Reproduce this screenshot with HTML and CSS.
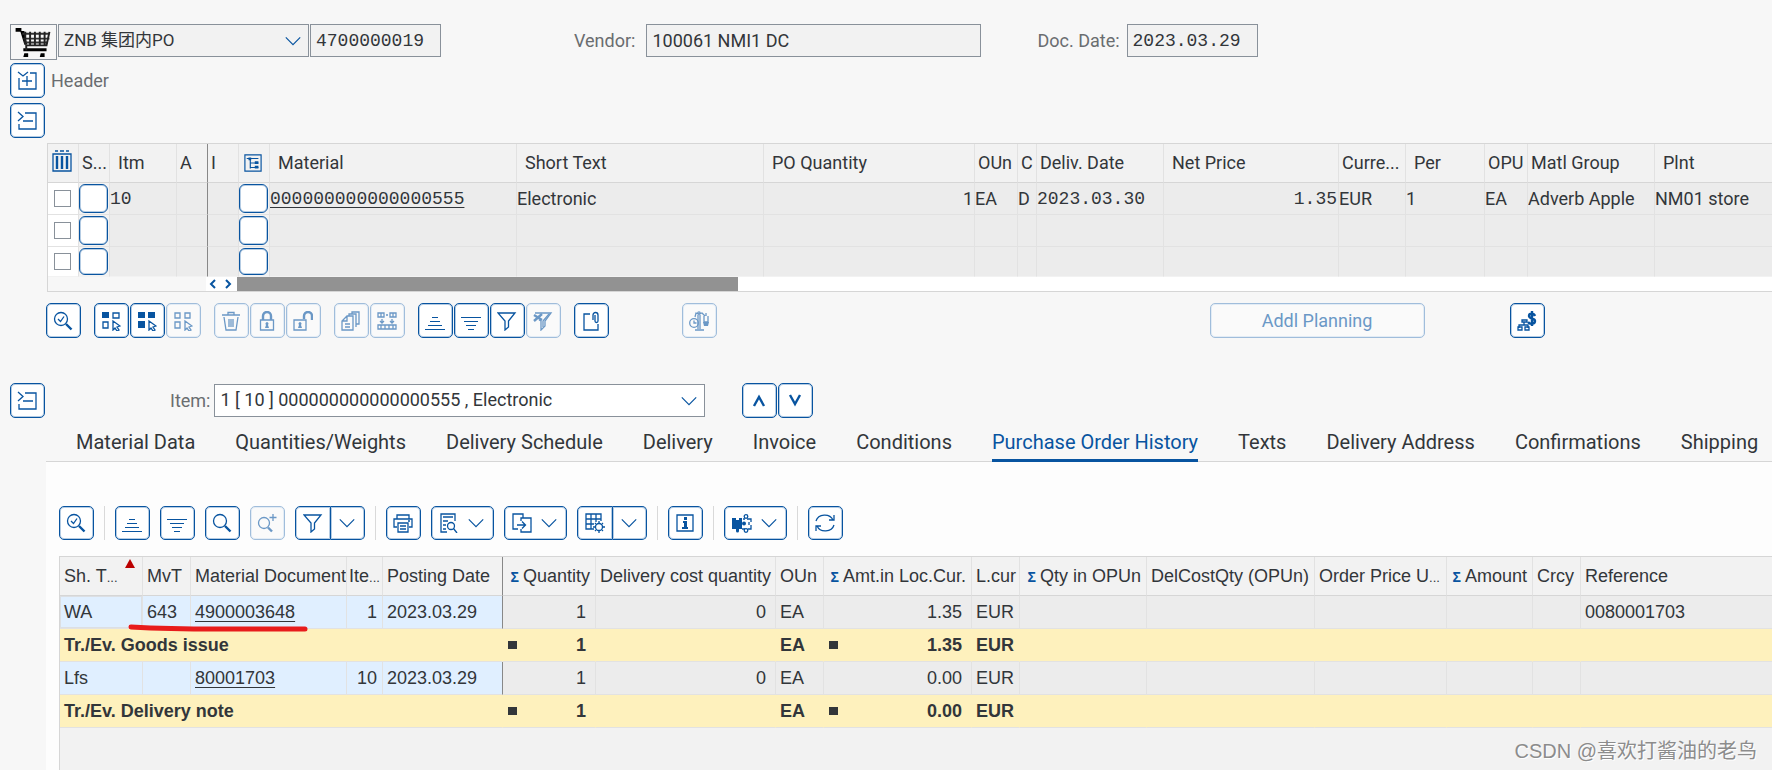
FILE: index.html
```html
<!DOCTYPE html>
<html lang="en">
<head>
<meta charset="utf-8">
<meta name="viewport" content="width=device-width, initial-scale=1">
<title>ZNB PO 4700000019</title>
<link rel="stylesheet" href="styles.css">
</head>
<body>
<svg class="sprite" aria-hidden="true">
  <symbol id="i-expand" viewBox="0 0 20 20"><path d="M1 1l5 4 5-4M13 2h6v16H2V7"/><path d="M5 10h10M10 5v10"/></symbol>
  <symbol id="i-collapse" viewBox="0 0 20 20"><path d="M1 1l5 4.500-5 4.500M8 2h11v16H2v-5M6 10h10"/></symbol>
  <symbol id="i-check-search" viewBox="0 0 20 20"><circle cx="8" cy="8" r="6.500"/><path d="M5 8l2.500 2.500L11 5.500"/><path class="thick" d="M13 13l5.500 5.500"/></symbol>
  <symbol id="i-search" viewBox="0 0 20 20"><circle cx="8" cy="8" r="6.500"/><path class="thick" d="M13 13l5.500 5.500"/></symbol>
  <symbol id="i-search-plus" viewBox="0 0 20 20"><circle cx="7" cy="10" r="5.500"/><path class="thick" d="M11 14.500l4 4"/><path d="M16 1v7M12.500 4.500h7"/></symbol>
  <symbol id="i-sel-one" viewBox="0 0 20 20"><path class="solid" d="M1 1h7v6H1z"/><path d="M12 2h6v5h-6zM2 11h5v6H2z"/><path d="M12 10l7 5-3 1 2 3-2 1-2-3-2 2z"/></symbol>
  <symbol id="i-sel-all" viewBox="0 0 20 20"><path class="solid" d="M1 1h7v6H1zM11 1h7v6h-7zM1 10h7v7H1z"/><path d="M12 10l7 5-3 1 2 3-2 1-2-3-2 2z"/></symbol>
  <symbol id="i-sel-none" viewBox="0 0 20 20"><path d="M2 2h5v5H2zM12 2h5v5h-5zM2 11h5v6H2z"/><path d="M12 10l7 5-3 1 2 3-2 1-2-3-2 2z"/></symbol>
  <symbol id="i-trash" viewBox="0 0 20 20"><path d="M1 4h18M7 4V1.500h6V4M3 6l2 13h10l2-13M8 8v8M10 8v8M12 8v8"/></symbol>
  <symbol id="i-lock" viewBox="0 0 20 20"><path d="M3.500 9h13v10h-13z"/><path class="thick" d="M6 9V5a4 4 0 0 1 8 0v4"/><path class="solid" d="M10 11a2 2 0 0 1 1 3l1 3H8l1-3a2 2 0 0 1 1-3z"/></symbol>
  <symbol id="i-unlock" viewBox="0 0 20 20"><path d="M1 9h12v10H1z"/><path class="thick" d="M11 8V5a4 4 0 0 1 8 0v4"/><path class="solid" d="M7 11a2 2 0 0 1 1 3l1 3H5l1-3a2 2 0 0 1 1-3z"/></symbol>
  <symbol id="i-copy" viewBox="0 0 20 20"><path d="M6 5h6v14H1v-9zM6 5v5H1M8 5V3h7v13M11 3V1h7v12h-3M4 13h5M4 16h5"/></symbol>
  <symbol id="i-split" viewBox="0 0 20 20"><path d="M1 2h6v4H1zM4 2v4M13 2h6v4h-6zM16 2v4M9 4h2M5 8v4M15 8v4M3 10l2 2 2-2M13 10l2 2 2-2M1 14h18v4H1zM4 14v4M8 14v4M12 14v4M16 14v4"/></symbol>
  <symbol id="i-asc" viewBox="0 0 20 20"><path class="rule" d="M7 6h6M5 10h10M3 14h14M0 18h20"/></symbol>
  <symbol id="i-desc" viewBox="0 0 20 20"><path class="rule" d="M0 6h20M3 10h14M5 14h10M7 18h6"/></symbol>
  <symbol id="i-filter" viewBox="0 0 20 20"><path d="M1 2h17l-6.500 8v6L8 19v-9z"/></symbol>
  <symbol id="i-filter-off" viewBox="0 0 20 20"><path d="M2 2h16l-6 8v5l-4 4v-9l-2-1"/><path class="thick" d="M1 4l8 5M9 3l-8 7"/><path d="M16 3l-6 7v6"/></symbol>
  <symbol id="i-attach" viewBox="0 0 20 20"><path d="M9 3H3v16h14v-6"/><path d="M12 9V4a2 2 0 0 1 5 0v6a1.500 1.500 0 0 1-3 0V4"/></symbol>
  <symbol id="i-scale" viewBox="0 0 20 20"><circle cx="5" cy="12" r="4.300"/><path d="M5 9.500V12h2.500M9 4v14M11 4v14M6 19h9M6 6l1-4 3 1 3-1 3 3M15 5v6h4V5M17 2v3"/><circle cx="10" cy="2" r="1.200"/><path class="solid" d="M14 11h6l-1 4h-4z"/></symbol>
  <symbol id="i-money" viewBox="0 0 20 20"><path d="M5 9h5v2H5zM7 11v3M2 17v-3h9v3M1 16h4v3H1zM8 16h4v3H8z"/><path class="thick" d="M18 5c-1-3-6-3-6 0s6 2 6 5-5 4-7 1M15 0v15"/></symbol>
  <symbol id="i-down" viewBox="0 0 20 20"><path d="M2 6l8 8 8-8"/></symbol>
  <symbol id="i-nav-up" viewBox="0 0 20 20"><path class="thick" d="M5 15l5-9 5 9"/></symbol>
  <symbol id="i-nav-down" viewBox="0 0 20 20"><path class="thick" d="M5 4l5 9 5-9"/></symbol>
  <symbol id="i-print" viewBox="0 0 20 20"><path d="M4 6V2h12v4M4 14H1V6h18v8h-3M5 10h10v9H5zM7 13h6M7 16h6M15 8h2"/></symbol>
  <symbol id="i-preview" viewBox="0 0 20 20"><path d="M8 19H2V1h14v7M4 4h10M4 8h5M4 12h3M4 16h3"/><circle cx="12" cy="13" r="3.500"/><path d="M14.500 15.500L18 20"/></symbol>
  <symbol id="i-export" viewBox="0 0 20 20"><path d="M6 16H1V1h10v4M9 8V5h10v14H9v-3M5 12h8M10 8.500l3.500 3.500-3.500 3.500"/></symbol>
  <symbol id="i-layout" viewBox="0 0 20 20"><path d="M9 16H1V1h15v7M1 6h15M1 11h8M6 1v15M11 1v8"/><circle cx="14" cy="14" r="3.500"/><path d="M14 8v2M14 18v2M8 14h2M18 14h2M10 10l1 1M17 17l1 1M18 10l-1 1M11 17l-1 1"/></symbol>
  <symbol id="i-info" viewBox="0 0 20 20"><path d="M2 2h16v16H2z"/><path class="solid" d="M9 4h3v3H9zM8 8h4v6h1v2H7v-2h2v-4H8z"/></symbol>
  <symbol id="i-puzzle" viewBox="0 0 20 20"><path class="solid" d="M0 5h4v2h3V5h3v11H7v2a1.500 1.500 0 0 1-3 0v-2H0z"/><circle class="solid" cx="12" cy="10.500" r="2"/><path d="M11 6h2M15 6h4v3M19 12v4h-3M13 16h-3M17 9v3"/><circle cx="14" cy="3.500" r="1.800"/><circle cx="14" cy="17.500" r="1.800"/></symbol>
  <symbol id="i-refresh" viewBox="0 0 20 20"><path d="M1 8a9 8 0 0 1 17-1M19 12a9 8 0 0 1-17 1M19 2v5h-5M1 18v-5h5"/></symbol>
  <symbol id="i-columns" viewBox="0 0 20 22"><path d="M3 1h3M8 1h4M14 1h3"/><path d="M1 4h18v17H1z"/><path class="thick" d="M5 6v13M10 6v13M15 6v13"/></symbol>
  <symbol id="i-config" viewBox="0 0 20 20"><path d="M1 1h18v18H1zM3 5h13M7 5v11M7 10h9M7 15h9"/><path class="solid" d="M5 4h3v3H5zM12 8h4v3h-4zM12 13h4v3h-4z"/></symbol>
</svg>

<header class="doc-header">
  <div class="doc-row">
    <svg class="cart" viewBox="0 0 36 30" aria-hidden="true">
      <path class="cart-solid" d="M0 0h6v3h3l3 14H9L5 4H0zM8 21h24v3H8zM9 26h4v4H8zM26 26h4v4h-5z"/>
      <path class="cart-rim" d="M7 6h28M8 11h27M9 15h24"/>
      <path class="cart-bar" d="M10 4v13M15 4v14M20 4v14M25 4v14M30 4v13M35 4l-3 14H10M11 17v6"/>
    </svg>
    <span class="select-box order-type">
      <select aria-label="Order type"><option>ZNB 集团内PO</option></select>
      <svg class="icon"><use href="#i-down"/></svg>
    </span>
    <input class="field mono order-no" type="text" value="4700000019" aria-label="Order number" readonly>
    <label class="vendor-label" for="vendor">Vendor:</label>
    <input class="field vendor" id="vendor" type="text" value="100061 NMI1 DC" readonly>
    <label class="date-label" for="doc-date">Doc. Date:</label>
    <input class="field mono doc-date" id="doc-date" type="text" value="2023.03.29" readonly>
  </div>
  <div class="toggle-row"><button class="btn" aria-label="Expand header"><svg class="icon"><use href="#i-expand"/></svg></button><span>Header</span></div>
  <div class="toggle-row"><button class="btn" aria-label="Collapse items"><svg class="icon"><use href="#i-collapse"/></svg></button></div>
</header>

<section class="items">
  <table class="grid items-grid">
    <colgroup><col class="w31"><col class="w31"><col class="w67"><col class="w31"><col class="w31"><col class="w31"><col class="w247"><col class="w247"><col class="w211"><col class="w43"><col class="w19"><col class="w127"><col class="w175"><col class="w67"><col class="w79"><col class="w43"><col class="w127"><col></colgroup>
    <thead>
      <tr>
        <th class="pic"><svg class="icon"><use href="#i-columns"/></svg></th><th>S...</th><th class="wide">Itm</th><th class="frozen">A</th><th>I</th><th class="pic"><svg class="icon small"><use href="#i-config"/></svg></th><th class="wide">Material</th><th class="wide">Short Text</th><th class="wide">PO Quantity</th><th>OUn</th><th>C</th><th>Deliv. Date</th><th class="wide">Net Price</th><th>Curre...</th><th class="wide">Per</th><th>OPU</th><th>Matl Group</th><th class="wide">Plnt</th>
      </tr>
    </thead>
    <tbody>
      <tr>
        <td class="tick"><input type="checkbox" aria-label="Select line 1"></td><td class="cell-btn"><button aria-label="Status 1"></button></td><td class="mono">10</td><td class="frozen"></td><td></td><td class="cell-btn"><button aria-label="Configuration 1"></button></td><td class="mono"><a href="#">000000000000000555</a></td><td>Electronic</td><td class="num">1</td><td>EA</td><td>D</td><td class="mono">2023.03.30</td><td class="num mono">1.35</td><td>EUR</td><td>1</td><td>EA</td><td>Adverb Apple</td><td>NM01 store</td>
      </tr>
      <tr>
        <td class="tick"><input type="checkbox" aria-label="Select line 2"></td><td class="cell-btn"><button aria-label="Status 2"></button></td><td></td><td class="frozen"></td><td></td><td class="cell-btn"><button aria-label="Configuration 2"></button></td><td></td><td></td><td></td><td></td><td></td><td></td><td></td><td></td><td></td><td></td><td></td><td></td>
      </tr>
      <tr>
        <td class="tick"><input type="checkbox" aria-label="Select line 3"></td><td class="cell-btn"><button aria-label="Status 3"></button></td><td></td><td class="frozen"></td><td></td><td class="cell-btn"><button aria-label="Configuration 3"></button></td><td></td><td></td><td></td><td></td><td></td><td></td><td></td><td></td><td></td><td></td><td></td><td></td>
      </tr>
    </tbody>
  </table>
  <div class="scroller">
    <button aria-label="Scroll left"><svg viewBox="0 0 8 10"><path d="M6 1L2 5l4 4"/></svg></button>
    <button aria-label="Scroll right"><svg viewBox="0 0 8 10"><path d="M2 1l4 4-4 4"/></svg></button>
    <div class="track"><div class="thumb"></div></div>
  </div>
</section>

<div class="item-tools">
  <div class="group"><button class="btn" aria-label="Details"><svg class="icon"><use href="#i-check-search"/></svg></button></div>
  <div class="group">
    <button class="btn" aria-label="Select block"><svg class="icon"><use href="#i-sel-one"/></svg></button>
    <button class="btn" aria-label="Select all"><svg class="icon"><use href="#i-sel-all"/></svg></button>
    <button class="btn" aria-label="Deselect all" disabled><svg class="icon"><use href="#i-sel-none"/></svg></button>
  </div>
  <div class="group">
    <button class="btn" aria-label="Delete" disabled><svg class="icon"><use href="#i-trash"/></svg></button>
    <button class="btn" aria-label="Lock" disabled><svg class="icon"><use href="#i-lock"/></svg></button>
    <button class="btn" aria-label="Unlock" disabled><svg class="icon"><use href="#i-unlock"/></svg></button>
  </div>
  <div class="group">
    <button class="btn" aria-label="Copy" disabled><svg class="icon"><use href="#i-copy"/></svg></button>
    <button class="btn" aria-label="Split" disabled><svg class="icon"><use href="#i-split"/></svg></button>
  </div>
  <div class="group">
    <button class="btn" aria-label="Sort ascending"><svg class="icon"><use href="#i-asc"/></svg></button>
    <button class="btn" aria-label="Sort descending"><svg class="icon"><use href="#i-desc"/></svg></button>
    <button class="btn" aria-label="Filter"><svg class="icon"><use href="#i-filter"/></svg></button>
    <button class="btn" aria-label="Delete filter" disabled><svg class="icon"><use href="#i-filter-off"/></svg></button>
  </div>
  <div class="group"><button class="btn" aria-label="Attachments"><svg class="icon"><use href="#i-attach"/></svg></button></div>
  <div class="group balance"><button class="btn" aria-label="Scale" disabled><svg class="icon"><use href="#i-scale"/></svg></button></div>
  <button class="btn planning" disabled>Addl Planning</button>
  <button class="btn costs" aria-label="Costs"><svg class="icon"><use href="#i-money"/></svg></button>
</div>

<div class="item-row">
  <button class="btn" aria-label="Collapse item detail"><svg class="icon"><use href="#i-collapse"/></svg></button>
  <label class="item-label" for="item">Item:</label>
  <span class="select-box item-select">
    <select id="item"><option>1 [ 10 ] 000000000000000555 , Electronic</option></select>
    <svg class="icon"><use href="#i-down"/></svg>
  </span>
  <div class="group item-nav">
    <button class="btn" aria-label="Previous item"><svg class="icon"><use href="#i-nav-up"/></svg></button>
    <button class="btn" aria-label="Next item"><svg class="icon"><use href="#i-nav-down"/></svg></button>
  </div>
</div>

<main class="detail">
  <div class="tabs" role="tablist">
    <button role="tab">Material Data</button><button role="tab">Quantities/Weights</button><button role="tab">Delivery Schedule</button><button role="tab">Delivery</button><button role="tab">Invoice</button><button role="tab">Conditions</button><button role="tab" aria-selected="true">Purchase Order History</button><button role="tab">Texts</button><button role="tab">Delivery Address</button><button role="tab">Confirmations</button><button role="tab">Shipping</button>
  </div>
  <div class="panel">
    <div class="history-tools">
      <button class="btn" aria-label="Details"><svg class="icon"><use href="#i-check-search"/></svg></button>
      <span class="sep"></span>
      <button class="btn" aria-label="Sort ascending"><svg class="icon"><use href="#i-asc"/></svg></button>
      <button class="btn" aria-label="Sort descending"><svg class="icon"><use href="#i-desc"/></svg></button>
      <button class="btn" aria-label="Find"><svg class="icon"><use href="#i-search"/></svg></button>
      <button class="btn" aria-label="Find next" disabled><svg class="icon"><use href="#i-search-plus"/></svg></button>
      <span class="split">
        <button class="btn" aria-label="Filter"><svg class="icon"><use href="#i-filter"/></svg></button>
        <button class="btn" aria-label="Filter menu"><svg class="icon arrow"><use href="#i-down"/></svg></button>
      </span>
      <span class="sep"></span>
      <button class="btn" aria-label="Print"><svg class="icon"><use href="#i-print"/></svg></button>
      <button class="btn menu" aria-label="Views"><svg class="icon"><use href="#i-preview"/></svg><svg class="icon arrow"><use href="#i-down"/></svg></button>
      <button class="btn menu" aria-label="Export"><svg class="icon"><use href="#i-export"/></svg><svg class="icon arrow"><use href="#i-down"/></svg></button>
      <span class="split">
        <button class="btn" aria-label="Layout"><svg class="icon"><use href="#i-layout"/></svg></button>
        <button class="btn" aria-label="Layout menu"><svg class="icon arrow"><use href="#i-down"/></svg></button>
      </span>
      <span class="sep"></span>
      <button class="btn" aria-label="Information"><svg class="icon"><use href="#i-info"/></svg></button>
      <span class="sep"></span>
      <button class="btn menu" aria-label="Extensions"><svg class="icon"><use href="#i-puzzle"/></svg><svg class="icon arrow"><use href="#i-down"/></svg></button>
      <span class="sep"></span>
      <button class="btn" aria-label="Refresh"><svg class="icon"><use href="#i-refresh"/></svg></button>
    </div>

    <div class="history">
      <table class="grid history-grid">
        <colgroup><col class="h83"><col class="h48"><col class="h156"><col class="h36"><col class="h120"><col class="h93"><col class="h180"><col class="h48"><col class="h148"><col class="h48"><col class="h127"><col class="h168"><col class="h132"><col class="h86"><col class="h48"><col></colgroup>
        <thead>
          <tr>
            <th>Sh. T<span class="dots">...</span><svg class="sorted" viewBox="0 0 10 9" aria-hidden="true"><path d="M5 0l5 9H0z"/></svg></th><th>MvT</th><th>Material Document</th><th class="tight">Ite<span class="dots">...</span></th><th class="frozen">Posting Date</th><th class="num"><span class="sigma">Σ</span>Quantity</th><th>Delivery cost quantity</th><th>OUn</th><th class="num"><span class="sigma">Σ</span>Amt.in Loc.Cur.</th><th>L.cur</th><th class="num"><span class="sigma">Σ</span>Qty in OPUn</th><th>DelCostQty (OPUn)</th><th>Order Price U<span class="dots">...</span></th><th class="num"><span class="sigma">Σ</span>Amount</th><th>Crcy</th><th>Reference</th>
          </tr>
        </thead>
        <tbody>
          <tr>
            <td class="key focus">WA</td><td class="key">643</td><td class="key"><a href="#">4900003648</a></td><td class="key num near">1</td><td class="key frozen">2023.03.29</td><td class="num">1</td><td class="num">0</td><td>EA</td><td class="num">1.35</td><td>EUR</td><td></td><td></td><td></td><td></td><td></td><td>0080001703</td>
          </tr>
          <tr class="total">
            <td colspan="5">Tr./Ev. Goods issue</td><td><div class="sum"><i></i>1</div></td><td></td><td>EA</td><td><div class="sum"><i></i>1.35</div></td><td>EUR</td><td></td><td></td><td></td><td></td><td></td><td></td>
          </tr>
          <tr>
            <td class="key">Lfs</td><td class="key"></td><td class="key"><a href="#">80001703</a></td><td class="key num near">10</td><td class="key frozen">2023.03.29</td><td class="num">1</td><td class="num">0</td><td>EA</td><td class="num">0.00</td><td>EUR</td><td></td><td></td><td></td><td></td><td></td><td></td>
          </tr>
          <tr class="total">
            <td colspan="5">Tr./Ev. Delivery note</td><td><div class="sum"><i></i>1</div></td><td></td><td>EA</td><td><div class="sum"><i></i>0.00</div></td><td>EUR</td><td></td><td></td><td></td><td></td><td></td><td></td>
          </tr>
        </tbody>
      </table>
      <svg class="marker" viewBox="0 0 180 8" aria-hidden="true"><path d="M3 3Q40 5 90 5T177 5"/></svg>
      <p class="credit">CSDN @喜欢打酱油的老鸟</p>
    </div>
  </div>
</main>
</body>
</html>
```

FILE: styles.css
```css
* { box-sizing: border-box; }

:root {
  --blue: #0854a0;
  --text: #32363a;
  --muted: #6a6d70;
  --edge: #89919a;
  --line: #e2e2e2;
  --frame: #d6d6d6;
}

body {
  margin: 0;
  min-height: 100vh;
  display: flex;
  flex-direction: column;
  overflow-x: hidden;
  background: #f7f7f7;
  color: var(--text);
  font: 18px/24px Roboto, "Noto Sans CJK SC", sans-serif;
}

button, input, select { font: inherit; color: inherit; }
.mono { font-family: "Liberation Mono", monospace; }
.sprite { display: none; }
label { color: var(--muted); }

.icon {
  width: 20px;
  height: 20px;
  flex: none;
  fill: none;
  stroke: currentColor;
  stroke-width: 1.3;
}
.thick { stroke-width: 2.4; }
.solid { fill: currentColor; stroke: none; }
.rule { stroke-width: 1; shape-rendering: crispEdges; }

.btn {
  display: flex;
  align-items: center;
  justify-content: center;
  flex: none;
  width: 35px;
  height: 35px;
  padding: 0 1px 0 0;
  border: 1px solid var(--blue);
  border-radius: 5px;
  background: #fff;
  color: var(--blue);
  box-shadow: inset 0 0 0 1px #b5cce3;
}
.btn:disabled {
  border-color: #a0bddb;
  background: #fafafa;
  color: #6b98c6;
  box-shadow: inset 0 0 0 1px #e3ecf5;
}
.group { display: flex; gap: 1px; }

/* Document header */
.doc-header {
  display: flex;
  flex-direction: column;
  gap: 5px;
  padding: 24px 0 5px 10px;
}
.doc-row {
  display: flex;
  align-items: flex-start;
  height: 34px;
}
.cart {
  width: 47px;
  height: 36px;
  flex: none;
  padding: 3px 5px 2px 4px;
  margin-right: 1px;
  border: 1px solid var(--edge);
}
.cart-solid { fill: #000; }
.cart-rim { fill: none; stroke: #333; stroke-width: 2; }
.cart-bar { fill: none; stroke: #222; stroke-width: 2; }

.field {
  height: 33px;
  padding: 0 5px;
  border: 1px solid var(--edge);
  border-radius: 0;
  background: #f2f2f2;
}
.select-box {
  display: grid;
  align-items: center;
  height: 33px;
  border: 1px solid var(--edge);
  background: #f2f2f2;
}
.select-box select {
  grid-area: 1 / 1;
  width: 100%;
  height: 31px;
  padding: 0 36px 2px 5px;
  border: 0;
  appearance: none;
  background: transparent;
}
.select-box .icon {
  grid-area: 1 / 1;
  justify-self: end;
  width: 18px;
  height: 18px;
  margin-right: 6px;
  color: var(--blue);
  pointer-events: none;
}
.order-type { width: 251px; margin-right: 1px; font-size: 17px; }
.order-no { width: 131px; }
.doc-row label { line-height: 33px; white-space: nowrap; }
.vendor-label { margin: 0 11px 0 133px; }
.vendor { width: 335px; }
.date-label { margin: 0 7px 0 56px; }
.doc-date { width: 131px; }
.toggle-row {
  display: flex;
  align-items: center;
  gap: 6px;
  color: var(--muted);
}

/* Grids */
.grid {
  width: 100%;
  table-layout: fixed;
  border-collapse: separate;
  border-spacing: 0;
}
.grid th, .grid td {
  padding: 0;
  border-right: 1px solid var(--line);
  border-bottom: 1px solid var(--line);
  text-align: left;
  white-space: nowrap;
  overflow: hidden;
}
.grid th {
  height: 39px;
  padding: 0 3px;
  background: #f2f2f2;
  border-bottom-color: var(--frame);
  font-weight: 400;
}
.grid td { background: #ececec; }
.grid th:last-child, .grid td:last-child { border-right: 0; }
.grid .frozen { border-right-color: #888; }
.grid .num { text-align: right; }
.grid a {
  color: inherit;
  text-decoration-thickness: 1px;
  text-underline-offset: 3px;
}

.items {
  margin-left: 47px;
  border: 1px solid var(--frame);
  border-right: 0;
}
.items-grid .wide { padding-left: 8px; }
.items-grid .num { padding-right: 1px; }
.items-grid .pic { padding: 0 2px 0 0; text-align: center; }
.items-grid .pic .icon {
  display: block;
  height: 22px;
  margin: 0 auto 4px;
  color: var(--blue);
}
.items-grid .pic .small { width: 18px; height: 18px; margin: 0 auto; }
.items-grid td { height: 32px; }
.items-grid tbody tr:last-child td { height: 30px; border-bottom-color: #f2f2f2; }
.items-grid .tick { padding: 0 2px 0 0; background: #fff; text-align: center; }
.tick input {
  display: block;
  width: 17px;
  height: 17px;
  margin: 0 auto;
  border: 1px solid var(--edge);
  background: #fff;
  appearance: none;
}
.items-grid .cell-btn { padding: 0; background: #f2f2f2; }
.cell-btn button {
  display: block;
  width: 29px;
  height: 29px;
  padding: 0;
  border: 1px solid var(--blue);
  border-radius: 6px;
  background: #fff;
  box-shadow: inset 0 0 0 1px #b5cce3;
}
.items-grid tbody tr:last-child button { height: 27px; }

.w19 { width: 19px; }
.w31 { width: 31px; }
.w43 { width: 43px; }
.w67 { width: 67px; }
.w79 { width: 79px; }
.w127 { width: 127px; }
.w175 { width: 175px; }
.w211 { width: 211px; }
.w247 { width: 247px; }

.scroller { display: flex; height: 14px; padding-left: 158px; }
.scroller button {
  width: 15px;
  height: 14px;
  padding: 2px 3px;
  border: 0;
  background: #fff;
}
.scroller svg {
  display: block;
  width: 8px;
  height: 10px;
  fill: none;
  stroke: var(--blue);
  stroke-width: 2;
}
.track { flex: 1; padding-left: 1px; background: #fff; }
.thumb { width: 501px; height: 14px; background: #929292; }

/* Item toolbar */
.item-tools {
  display: flex;
  gap: 13px;
  padding: 11px 0 0 46px;
}
.balance { margin-left: 60px; }
.item-tools .planning { width: 215px; margin-left: 480px; }
.item-tools .costs { margin-left: 72px; }

/* Item selector */
.item-row {
  display: flex;
  align-items: center;
  padding: 45px 0 3px 10px;
}
.item-label { margin: 0 4px 0 125px; }
.item-select { width: 491px; background: #fff; }
.item-nav { margin-left: 37px; }

/* Detail tabs */
.detail {
  flex: 1;
  display: flex;
  flex-direction: column;
  margin-left: 46px;
}
.tabs {
  display: flex;
  gap: 40px;
  height: 41px;
  padding-left: 30px;
  border-bottom: 1px solid var(--frame);
}
.tabs button {
  flex: none;
  height: 41px;
  padding: 4px 0 0;
  border: 0;
  border-bottom: 3px solid transparent;
  background: none;
  font-size: 20px;
}
.tabs [aria-selected="true"] { color: var(--blue); border-bottom-color: var(--blue); }

.panel {
  flex: 1;
  display: flex;
  flex-direction: column;
  padding: 44px 0 0 13px;
  background: #fdfdfd;
}
.history-tools { display: flex; gap: 10px; margin-bottom: 16px; }
.history-tools .btn { height: 34px; }
.history-tools .sep { width: 1px; background: #d9d9d9; }
.history-tools .menu { width: 63px; gap: 8px; }
.history-tools .arrow { width: 18px; height: 18px; }
.split { display: flex; }
.split .btn:first-child { width: 36px; border-radius: 5px 0 0 5px; }
.split .btn:last-child { width: 34px; border-left: 0; border-radius: 0 5px 5px 0; }

.history {
  position: relative;
  flex: 1;
  border: 1px solid var(--frame);
  border-width: 1px 0 0 1px;
  background: #f2f2f2;
  font-family: "Liberation Sans", Arial, sans-serif;
}
.history-grid th { padding: 0 4px; }
.history-grid td { height: 33px; padding: 0 4px; }
.history-grid .num { padding-right: 9px; }
.history-grid th.num { padding-right: 5px; }
.history-grid th.tight { padding: 0 2px; }
.history-grid .near { padding-right: 5px; }
.history-grid .key { background: #e0efff; }
.history-grid .focus { box-shadow: inset 0 0 0 1px #dcdfe3; }
.history-grid .total td {
  background: #fef1bd;
  border-right-color: transparent;
  font-weight: 700;
}
.dots { font-size: 13px; line-height: 1; }
.sigma {
  margin-right: 4px;
  color: var(--blue);
  font-size: 14px;
  font-weight: 700;
  line-height: 1;
}
.history-grid th:first-child { position: relative; }
.sorted {
  position: absolute;
  top: 2px;
  right: 7px;
  width: 10px;
  height: 9px;
  fill: #bb0000;
}
.sum {
  display: flex;
  align-items: center;
  justify-content: space-between;
  padding: 0 5px 0 1px;
}
.sum i { width: 9px; height: 8px; background: var(--text); }

.h36 { width: 36px; }
.h48 { width: 48px; }
.h83 { width: 83px; }
.h86 { width: 86px; }
.h93 { width: 93px; }
.h120 { width: 120px; }
.h127 { width: 127px; }
.h132 { width: 132px; }
.h148 { width: 148px; }
.h156 { width: 156px; }
.h168 { width: 168px; }
.h180 { width: 180px; }

.marker {
  position: absolute;
  top: 67px;
  left: 68px;
  width: 180px;
  height: 8px;
  fill: none;
  stroke: #e81c1c;
  stroke-width: 5;
  stroke-linecap: round;
}
.credit {
  position: absolute;
  right: 15px;
  bottom: 7px;
  margin: 0;
  color: #8c8c8c;
  font: 20px/24px "Liberation Sans", "Noto Sans CJK SC", sans-serif;
  text-shadow: 1px 1px 0 #fff;
}
```
